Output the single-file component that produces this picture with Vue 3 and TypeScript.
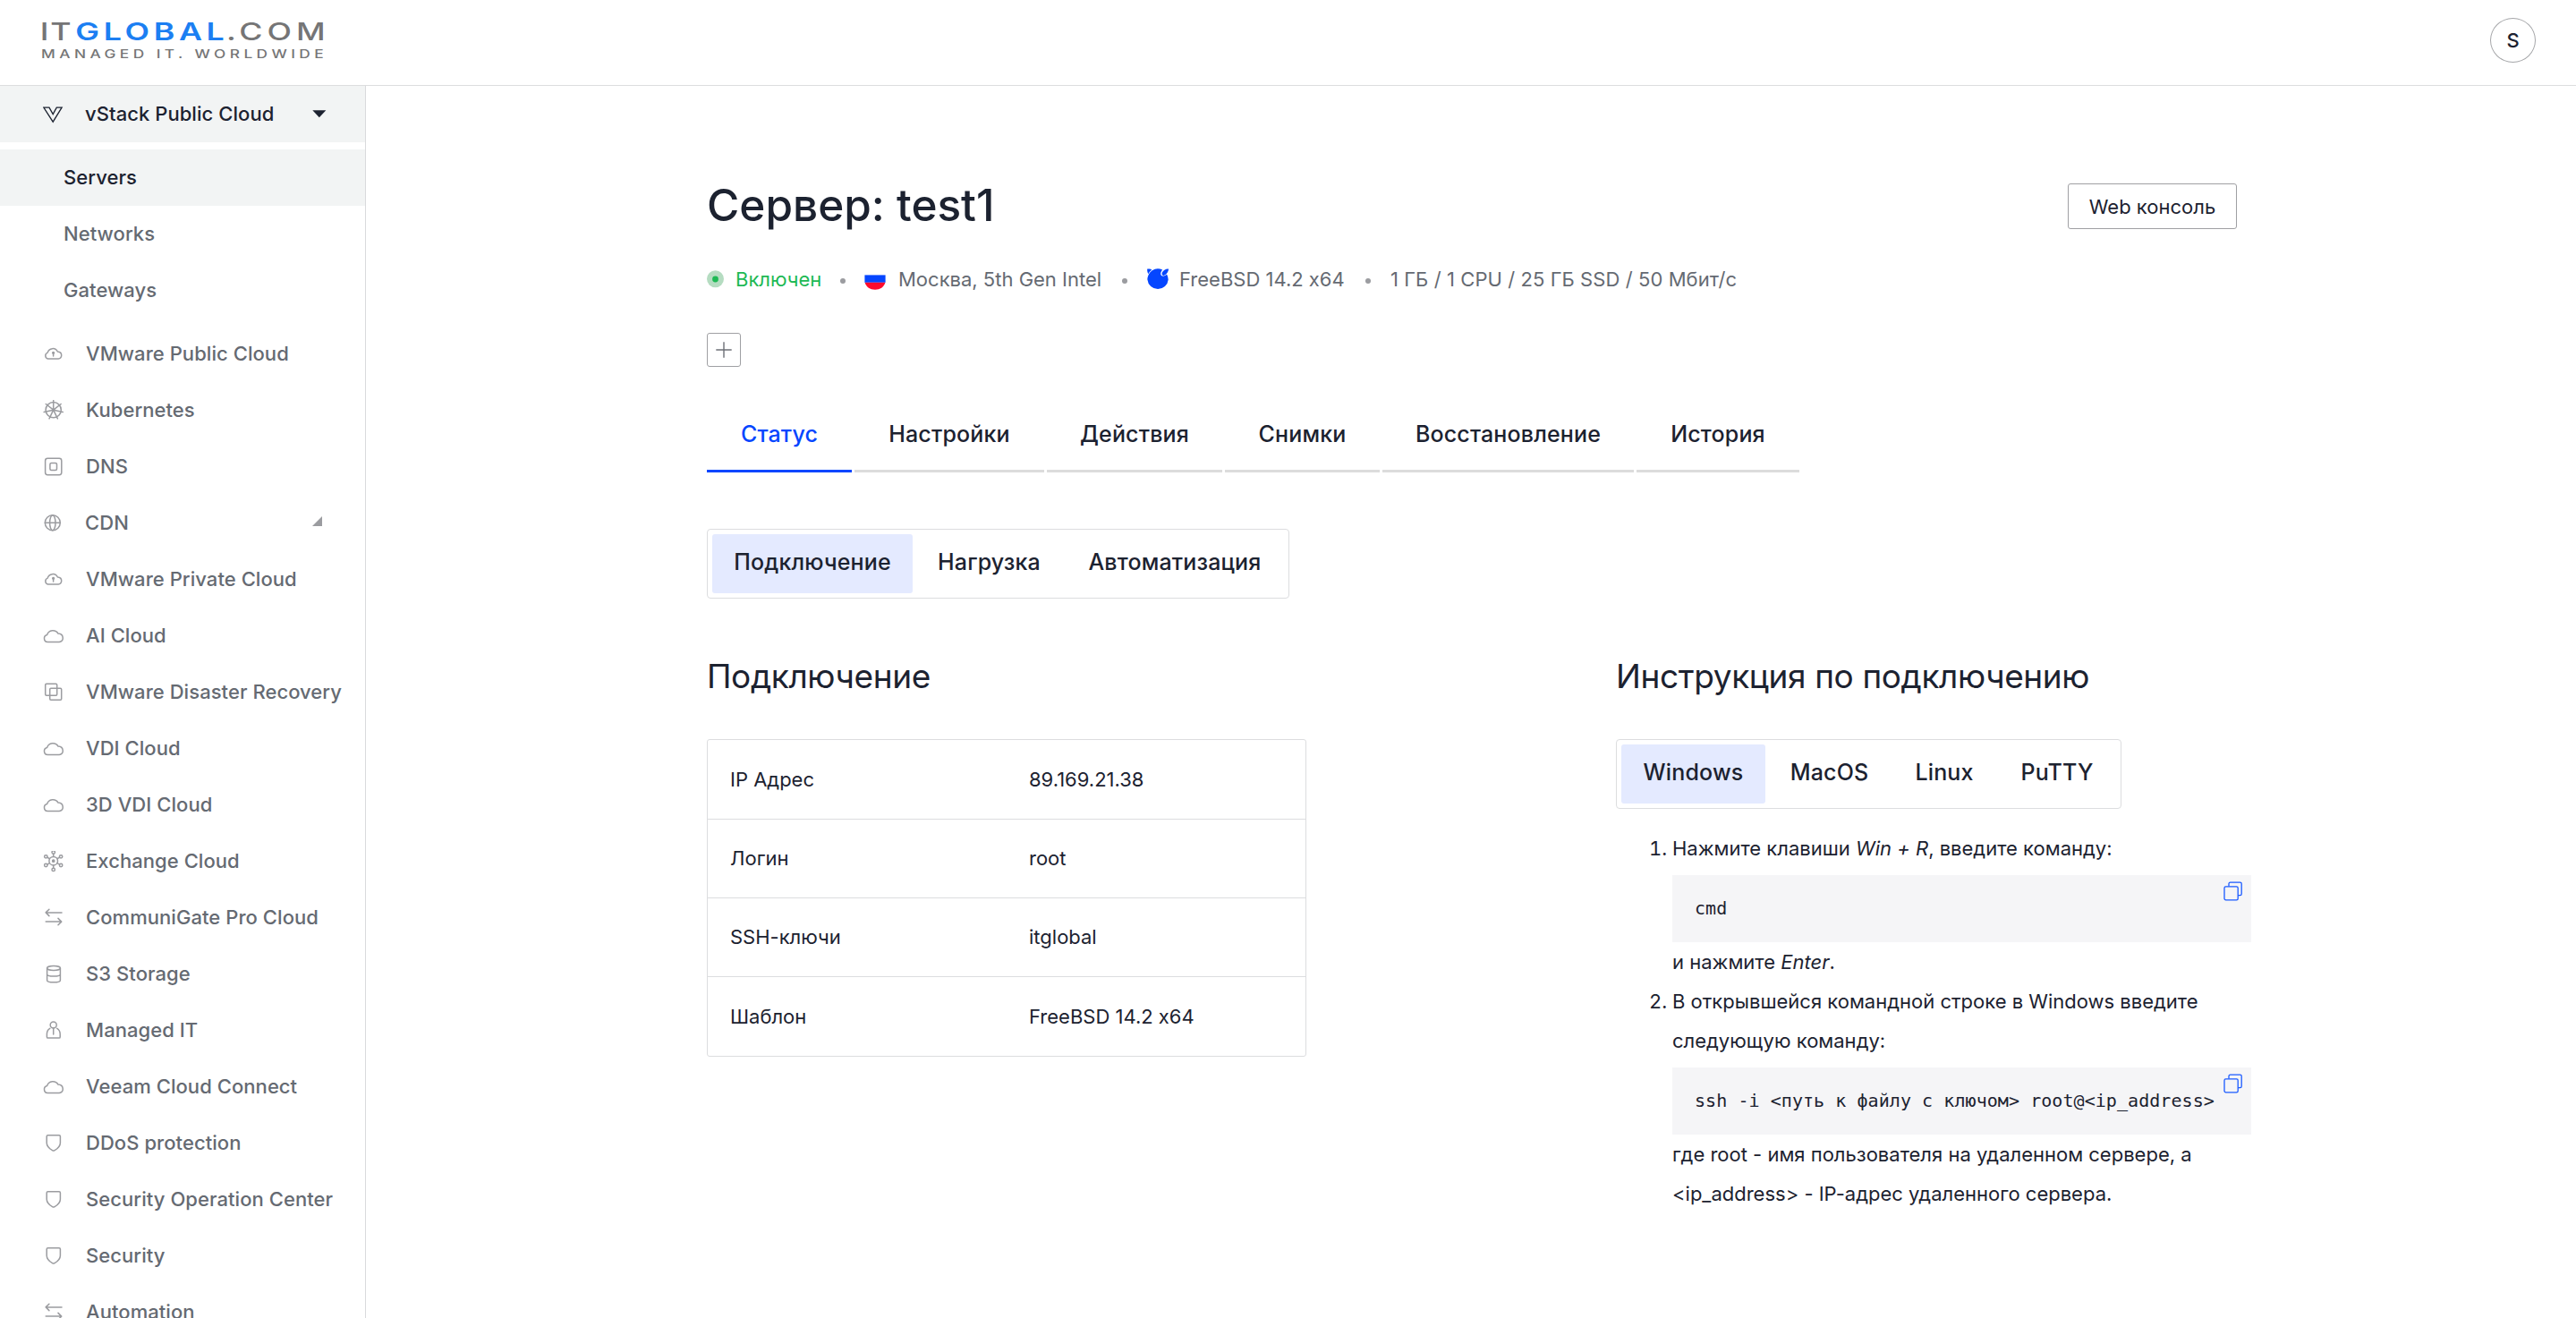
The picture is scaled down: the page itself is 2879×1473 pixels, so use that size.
<script setup lang="ts">
import { ref } from 'vue'

interface NavItem {
  label: string
  icon: string
  expandable?: boolean
}

const subItems = ['Servers', 'Networks', 'Gateways']

const navItems: NavItem[] = [
  { label: 'VMware Public Cloud', icon: 'cloud-lock' },
  { label: 'Kubernetes', icon: 'wheel' },
  { label: 'DNS', icon: 'dns' },
  { label: 'CDN', icon: 'globe', expandable: true },
  { label: 'VMware Private Cloud', icon: 'cloud-lock' },
  { label: 'AI Cloud', icon: 'cloud' },
  { label: 'VMware Disaster Recovery', icon: 'copies' },
  { label: 'VDI Cloud', icon: 'cloud' },
  { label: '3D VDI Cloud', icon: 'cloud' },
  { label: 'Exchange Cloud', icon: 'hub' },
  { label: 'CommuniGate Pro Cloud', icon: 'arrows' },
  { label: 'S3 Storage', icon: 'database' },
  { label: 'Managed IT', icon: 'person' },
  { label: 'Veeam Cloud Connect', icon: 'cloud' },
  { label: 'DDoS protection', icon: 'shield' },
  { label: 'Security Operation Center', icon: 'shield' },
  { label: 'Security', icon: 'shield' },
  { label: 'Automation', icon: 'arrows' },
]

const spokes = Array.from({ length: 7 }, (_, i) => {
  const a = (i * 2 * Math.PI) / 7 - Math.PI / 2
  return { x: 11.7 + 10.8 * Math.cos(a), y: 11.2 + 10.8 * Math.sin(a) }
})

const satellites = Array.from({ length: 6 }, (_, i) => {
  const a = (i * Math.PI) / 3 - Math.PI / 2
  const c = Math.cos(a)
  const s = Math.sin(a)
  return {
    x: 11.7 + 9.7 * c,
    y: 11.2 + 9.7 * s,
    x1: 11.7 + 5 * c,
    y1: 11.2 + 5 * s,
    x2: 11.7 + 7.9 * c,
    y2: 11.2 + 7.9 * s,
  }
})

const tabs = [
  { label: 'Статус', width: 162 },
  { label: 'Настройки', width: 212 },
  { label: 'Действия', width: 196 },
  { label: 'Снимки', width: 173 },
  { label: 'Восстановление', width: 281 },
  { label: 'История', width: 182 },
]
const activeTab = ref('Статус')

const sections = [
  { label: 'Подключение', width: 224 },
  { label: 'Нагрузка', width: 165 },
  { label: 'Автоматизация', width: 244 },
]
const activeSection = ref('Подключение')

const systems = [
  { label: 'Windows', width: 161 },
  { label: 'MacOS', width: 137 },
  { label: 'Linux', width: 114 },
  { label: 'PuTTY', width: 132 },
]
const activeSystem = ref('Windows')

const rows = [
  ['IP Адрес', '89.169.21.38'],
  ['Логин', 'root'],
  ['SSH-ключи', 'itglobal'],
  ['Шаблон', 'FreeBSD 14.2 x64'],
]
</script>

<template>
  <div class="app">
    <header class="header">
      <svg class="logo" width="320" height="50" viewBox="0 0 320 50">
        <g class="logo-main" transform="translate(0 25.2) scale(1.3 1)">
          <text x="-1" y="0" textLength="26.800" lengthAdjust="spacing">IT</text>
          <text class="accent" x="29.500" y="0" textLength="128" lengthAdjust="spacing">GLOBAL</text>
          <text x="159.300" y="0" textLength="85" lengthAdjust="spacing">.COM</text>
        </g>
        <g transform="translate(0 45) scale(1.3 1)">
          <text class="logo-sub" x="0" y="0" textLength="242.800" lengthAdjust="spacing">MANAGED IT. WORLDWIDE</text>
        </g>
      </svg>
      <div class="avatar">S</div>
    </header>

    <div class="body">
      <aside class="sidebar">
        <div class="product">
          <svg class="icon dark" viewBox="0 0 24 24">
            <path d="M.8 4.1H7L11.2 11.6L15.3 4.1H21.1L11.2 20.2Z" />
          </svg>
          <span>vStack Public Cloud</span>
          <svg class="caret" width="16" height="9" viewBox="0 0 16 9"><path d="M.3.3H15.3L7.8 8.3Z" /></svg>
        </div>
        <nav class="sub">
          <a v-for="(s, i) in subItems" :key="s" class="sub-item" :class="{ active: i === 0 }"><span>{{ s }}</span></a>
        </nav>
        <nav>
          <a v-for="item in navItems" :key="item.label" class="nav-item" :class="{ expandable: item.expandable }">
            <svg class="icon" viewBox="0 0 24 24">
              <template v-if="item.icon === 'cloud'">
                <path d="M5.3 18.500A4 4 0 0 1 4.600 10.600A6.800 6.800 0 0 1 17 9.100C24 9.500 23.600 18.500 18.200 18.500Z" />
              </template>
              <template v-else-if="item.icon === 'cloud-lock'">
                <path d="M5.600 17A3.600 3.600 0 0 1 5.2 10.100A6 6 0 0 1 16.400 9C22.300 9.300 21.700 17 17.200 17Z" />
                <circle cx="11.600" cy="10.300" r=".9" class="solid" />
                <path d="M11.600 10.500V14" />
              </template>
              <template v-else-if="item.icon === 'wheel'">
                <circle cx="11.7" cy="11.2" r="8.6" />
                <line v-for="(p, i) in spokes" :key="i" x1="11.7" y1="11.2" :x2="p.x" :y2="p.y" />
                <circle cx="11.7" cy="11.2" r="1.1" class="solid" />
              </template>
              <template v-else-if="item.icon === 'dns'">
                <rect x="2.6" y="2.3" width="18.2" height="18.4" rx="2.6" />
                <rect x="7.900" y="7.600" width="7.600" height="7.800" rx="1.500" />
              </template>
              <template v-else-if="item.icon === 'globe'">
                <circle cx="10.8" cy="11.2" r="8.5" />
                <ellipse cx="10.8" cy="11.2" rx="3.2" ry="8.5" />
                <path d="M2.3 11.2H19.3" />
              </template>
              <template v-else-if="item.icon === 'copies'">
                <rect x="2.7" y="2.3" width="13" height="13" rx="1.2" />
                <rect x="7.700" y="7.300" width="13" height="13" rx="1.200" />
              </template>
              <template v-else-if="item.icon === 'hub'">
                <circle cx="11.7" cy="11.2" r="4.8" />
                <circle cx="11.7" cy="11.2" r="1.1" class="solid" />
                <template v-for="(p, i) in satellites" :key="i">
                  <line :x1="p.x1" :y1="p.y1" :x2="p.x2" :y2="p.y2" />
                  <circle :cx="p.x" :cy="p.y" r="1.7" />
                </template>
              </template>
              <template v-else-if="item.icon === 'arrows'">
                <path d="M21 5.900H3.200M6.900 2.200L3.200 5.900L6.900 9.600M3.200 16.100H20.700M17 12.400L20.700 16.100L17 19.800" />
              </template>
              <template v-else-if="item.icon === 'database'">
                <ellipse cx="12" cy="5" rx="7.4" ry="2.5" />
                <path d="M4.600 5V18.400C4.600 21.600 19.400 21.600 19.400 18.400V5M4.600 11.700C4.600 14.900 19.400 14.900 19.400 11.700" />
              </template>
              <template v-else-if="item.icon === 'person'">
                <circle cx="11.700" cy="5.600" r="3.500" />
                <path d="M7.800 9.300C5.500 10.600 4.400 13 4.400 15.800V18.900Q4.400 20.100 5.600 20.100H18Q19.200 20.100 19.200 18.900V15.800C19.200 13 18 10.600 15.700 9.300M11.700 9.100V15.900" />
              </template>
              <template v-else>
                <path d="M5.600 2.700H18Q19.400 2.700 19.400 4.100V11.200C19.400 15.500 14.800 18.700 12.700 19.900Q11.800 20.300 10.900 19.900C8.800 18.700 4.200 15.500 4.200 11.200V4.100Q4.200 2.700 5.600 2.700Z" />
              </template>
            </svg>
            <span>{{ item.label }}</span>
            <svg v-if="item.expandable" class="corner" width="11" height="11" viewBox="0 0 11 11"><path d="M11 0V11H0Z" /></svg>
          </a>
        </nav>
      </aside>

      <main class="main">
        <div class="title-row">
          <h1>Сервер: test1</h1>
          <button class="console">Web консоль</button>
        </div>

        <div class="status">
          <svg class="state-dot" width="20" height="20" viewBox="0 0 20 20">
            <circle cx="9.500" cy="9.800" r="9.500" fill="#b5dcc1" />
            <circle cx="9.500" cy="10" r="3.400" fill="#1db954" />
          </svg>
          <span class="on">Включен</span>
          <i class="sep"></i>
          <svg class="flag" width="24" height="24" viewBox="0 0 24 24">
            <path d="M.4 7.400H23.600V15.800H.4Z" fill="#0546ff" />
            <path d="M.6 15.800H23.400C22 20.800 17.600 23.800 12 23.800S2 20.800.6 15.800Z" fill="#ff0a2d" />
          </svg>
          <span class="place">Москва, 5th Gen Intel</span>
          <i class="sep"></i>
          <svg class="bsd" width="24" height="24" viewBox="0 0 24 24">
            <path fill="#0546ff" d="M5.700 2.200A11.800 11.800 0 0 1 17.200 1.600C15.600 3.500 14.700 5.700 15.500 7.300C16.500 9.200 19.500 9 22 6.500A11.800 11.800 0 0 1 23.700 12.500A11.700 11.500 0 0 1 .4 12.500C.4 8.700 2.500 4.500 5.700 2.200Z" />
            <path fill="#0546ff" d="M.3.6C2.200.1 4.200.6 5.500 1.500C3.400 2.900 2.200 4.500 1.400 6.200C.2 4.200-.1 2.200.3.600ZM23.900.5C24.500 2.700 21.300 8.200 18.400 7.900C16.600 7.800 16.200 6.200 16.900 4.600C17.900 2.200 21.500 0 23.900.5Z" />
          </svg>
          <span class="os">FreeBSD 14.2 x64</span>
          <i class="sep"></i>
          <span class="spec">1 ГБ / 1 CPU / 25 ГБ SSD / 50 Мбит/с</span>
        </div>

        <button class="plus" aria-label="add">
          <svg width="18" height="18" viewBox="0 0 18 18"><path d="M9 .3V17.700M.3 9H17.700" /></svg>
        </button>

        <div class="tabs">
          <a
            v-for="t in tabs"
            :key="t.label"
            class="tab"
            :class="{ active: t.label === activeTab }"
            :style="{ width: t.width + 'px' }"
            @click="activeTab = t.label"
          >{{ t.label }}</a>
        </div>

        <div class="segment">
          <a
            v-for="s in sections"
            :key="s.label"
            class="segment-item"
            :class="{ active: s.label === activeSection }"
            :style="{ width: s.width + 'px' }"
            @click="activeSection = s.label"
          >{{ s.label }}</a>
        </div>

        <div class="columns">
          <section class="connect">
            <h2>Подключение</h2>
            <dl class="table">
              <div v-for="r in rows" :key="r[0]" class="row">
                <dt>{{ r[0] }}</dt>
                <dd>{{ r[1] }}</dd>
              </div>
            </dl>
          </section>

          <section class="guide">
            <h2>Инструкция по подключению</h2>
            <div class="segment">
              <a
                v-for="s in systems"
                :key="s.label"
                class="segment-item"
                :class="{ active: s.label === activeSystem }"
                :style="{ width: s.width + 'px' }"
                @click="activeSystem = s.label"
              >{{ s.label }}</a>
            </div>
            <ol class="steps">
              <li>
                <p>Нажмите клавиши <em>Win + R</em>, введите команду:</p>
                <div class="code">
                  <code>cmd</code>
                  <svg class="copy" width="22" height="22" viewBox="0 0 22 22">
                    <path d="M6 5.500V2.800Q6 1.200 7.600 1.200H18.600Q20.200 1.200 20.200 2.800V14Q20.200 15.600 18.600 15.600H16.300" />
                    <rect x="1" y="5.900" width="15.200" height="14.900" rx="1.600" />
                  </svg>
                </div>
                <p>и нажмите <em>Enter</em>.</p>
              </li>
              <li>
                <p>В открывшейся командной строке в Windows введите<br />следующую команду:</p>
                <div class="code">
                  <code>ssh -i &lt;путь к файлу с ключом&gt; root@&lt;ip_address&gt;</code>
                  <svg class="copy" width="22" height="22" viewBox="0 0 22 22">
                    <path d="M6 5.500V2.800Q6 1.200 7.600 1.200H18.600Q20.200 1.200 20.200 2.800V14Q20.200 15.600 18.600 15.600H16.300" />
                    <rect x="1" y="5.900" width="15.200" height="14.900" rx="1.600" />
                  </svg>
                </div>
                <p>где root - имя пользователя на удаленном сервере, а<br />&lt;ip_address&gt; - IP-адрес удаленного сервера.</p>
              </li>
            </ol>
          </section>
        </div>
      </main>
    </div>
  </div>
</template>

<style>
body {
  margin: 0;
  background: #fff;
}
</style>

<style scoped>
.app {
  height: 1473px;
  overflow: hidden;
  display: flex;
  flex-direction: column;
  font-family: Inter, "Liberation Sans", sans-serif;
  font-feature-settings: "calt" 0;
  font-size: 22px;
  color: #1c2230;
  background: #fff;
}
.header {
  box-sizing: border-box;
  flex: none;
  height: 96px;
  padding: 20px 45px 0 46px;
  border-bottom: 1px solid #dcdddf;
  display: flex;
  justify-content: space-between;
  align-items: flex-start;
}
.logo {
  overflow: visible;
}
.logo-main {
  font-size: 27.5px;
  font-weight: 500;
  fill: #757576;
}
.logo-main .accent {
  fill: #1c7ff2;
  font-weight: 600;
}
.logo-sub {
  font-size: 13.3px;
  font-weight: 500;
  fill: #757576;
}
.avatar {
  box-sizing: border-box;
  width: 51px;
  height: 50px;
  border: 1px solid #a5a6a9;
  border-radius: 50%;
  display: flex;
  align-items: center;
  justify-content: center;
  font-weight: 500;
}
.body {
  flex: 1;
  min-height: 0;
  display: flex;
}
.sidebar {
  box-sizing: border-box;
  flex: none;
  width: 409px;
  border-right: 1px solid #d9dadc;
  overflow: hidden;
  font-weight: 460;
  letter-spacing: 0.06px;
}
.sidebar span {
  margin-bottom: 2px;
}
.icon {
  flex: none;
  width: 24px;
  height: 24px;
  margin-right: 24px;
  fill: none;
  stroke: #9b9ca0;
  stroke-width: 1.5;
  stroke-linecap: round;
  stroke-linejoin: round;
}
.icon .solid {
  fill: #9b9ca0;
}
.icon.dark {
  stroke: #1c2230;
  stroke-width: 1.3;
  stroke-linejoin: miter;
}
.product {
  height: 63px;
  padding-left: 48px;
  background: #f2f4f4;
  display: flex;
  align-items: center;
}
.product .icon,
.expandable .icon {
  margin-right: 23px;
}
.caret {
  margin-left: auto;
  margin-right: 43px;
  fill: #1c2230;
}
.sub {
  padding: 8px 0;
}
.sub-item {
  height: 63px;
  padding-left: 71px;
  display: flex;
  align-items: center;
  color: #656a72;
}
.sub-item.active {
  background: #f2f4f4;
  color: #1c2230;
}
.nav-item {
  height: 63px;
  padding-left: 48px;
  display: flex;
  align-items: center;
  color: #656a72;
}
.corner {
  margin-left: auto;
  margin-right: 48px;
  margin-bottom: 4px;
  fill: #9b9ca0;
}
.main {
  flex: none;
  width: 1710px;
  padding: 101px 0 0 381px;
}
.title-row {
  height: 68px;
  display: flex;
  align-items: center;
  justify-content: space-between;
}
h1 {
  margin: 0 0 4px;
  font-size: 49.5px;
  line-height: 64px;
  font-weight: 500;
}
.console {
  box-sizing: border-box;
  width: 189px;
  height: 51px;
  margin: 0 0 1px;
  padding: 0;
  border: 1px solid #9fa0a3;
  border-radius: 3px;
  background: #fff;
  color: #1c2230;
  font: 400 22px Inter, sans-serif;
}
.status {
  height: 32px;
  margin-top: 31px;
  display: flex;
  align-items: center;
  color: #656a72;
  white-space: nowrap;
}
.status .on {
  color: #1db954;
  width: 95px;
  margin-left: 12px;
}
.sep {
  width: 6px;
  height: 6px;
  margin: 4px 21px 0 22px;
  border-radius: 50%;
  background: #9b9ca0;
}
.flag {
  margin-right: 14px;
}
.place {
  width: 228px;
}
.bsd {
  margin-left: 1px;
  margin-right: 12px;
}
.os {
  width: 186px;
}
.spec {
  margin-left: 1px;
  letter-spacing: 0.08px;
}
.plus {
  box-sizing: border-box;
  width: 38px;
  height: 38px;
  margin: 44px 0 0;
  padding: 0;
  border: 1px solid #9fa0a3;
  border-radius: 3px;
  background: #fff;
  display: flex;
  align-items: center;
  justify-content: center;
}
.plus svg {
  fill: none;
  stroke: #6d7077;
  stroke-width: 1.4;
}
.tabs {
  display: flex;
  gap: 3px;
  margin-top: 35px;
}
.tab {
  box-sizing: border-box;
  height: 83px;
  padding-top: 23px;
  border-bottom: 3px solid #dcdcdc;
  text-align: center;
  font-size: 25px;
  line-height: 35px;
  font-weight: 460;
  letter-spacing: 0.16px;
}
.tab.active {
  color: #0546ff;
  border-color: #0546ff;
}
.segment {
  box-sizing: border-box;
  width: max-content;
  height: 78px;
  padding: 5px;
  border: 1px solid #dcdddf;
  border-radius: 4px;
  display: flex;
  gap: 3px;
}
.tabs + .segment {
  margin-top: 63px;
}
.segment-item {
  height: 66px;
  border-radius: 3px;
  text-align: center;
  font-size: 25px;
  line-height: 63px;
  font-weight: 460;
  letter-spacing: 0.16px;
}
.segment-item.active {
  background: #e4eaff;
}
.columns {
  display: flex;
  margin-top: 59px;
}
h2 {
  margin: 0 0 43px;
  font-size: 37px;
  line-height: 55px;
  font-weight: 400;
  letter-spacing: -0.38px;
  white-space: nowrap;
}
.connect {
  flex: none;
  width: 1016px;
}
.table {
  box-sizing: border-box;
  width: 670px;
  margin: 0;
  border: 1px solid #dcdddf;
  border-radius: 3px;
}
.row {
  box-sizing: border-box;
  height: 88px;
  padding: 0 0 1px 25px;
  border-bottom: 1px solid #dcdddf;
  display: flex;
  align-items: center;
}
.row:first-child {
  height: 89px;
}
.row:last-child {
  border-bottom: 0;
}
dt {
  width: 334px;
}
dd {
  margin: 0;
}
.guide {
  flex: none;
  width: 710px;
}
.steps {
  margin: 22px 0 0;
  padding-left: 63px;
  line-height: 44px;
}
.steps p {
  margin: 0;
  white-space: nowrap;
}
.code {
  position: relative;
  box-sizing: border-box;
  width: 647px;
  height: 75.5px;
  margin-top: 7.5px;
  padding-left: 25px;
  display: flex;
  align-items: center;
  background: #f5f5f7;
}
.code code {
  font: 20px "DejaVu Sans Mono", monospace;
  letter-spacing: 0.06px;
  white-space: pre;
}
.copy {
  position: absolute;
  top: 7px;
  right: 9px;
  fill: none;
  stroke: #1a5aff;
  stroke-width: 1.3;
}
</style>
